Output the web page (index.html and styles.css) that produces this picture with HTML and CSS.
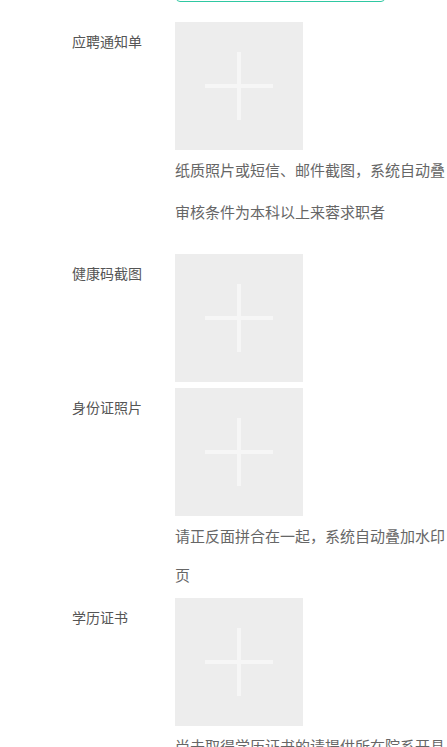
FILE: index.html
```html
<!DOCTYPE html>
<html lang="zh-CN">
<head>
    <meta charset="UTF-8">
    <meta name="viewport" content="width=device-width, initial-scale=1.0">
    <title>上传材料</title>
    <link rel="stylesheet" href="styles.css">
</head>
<body>
    <div class="form">
        <div class="row row-top">
            <div class="label"></div>
            <div class="field">
                <div class="input"></div>
            </div>
        </div>

        <div class="row">
            <div class="label">应聘通知单</div>
            <div class="field">
                <div class="upload"><span class="plus"></span></div>
                <p class="hint">纸质照片或短信、邮件截图，系统自动叠</p>
                <p class="hint hint-last">审核条件为本科以上来蓉求职者</p>
            </div>
        </div>

        <div class="row">
            <div class="label">健康码截图</div>
            <div class="field">
                <div class="upload"><span class="plus"></span></div>
            </div>
        </div>

        <div class="row">
            <div class="label">身份证照片</div>
            <div class="field">
                <div class="upload"><span class="plus"></span></div>
                <p class="hint hint-wrap">请正反面拼合在一起，系统自动叠加水印页</p>
            </div>
        </div>

        <div class="row">
            <div class="label">学历证书</div>
            <div class="field">
                <div class="upload"><span class="plus"></span></div>
                <p class="hint hint-wrap">尚未取得学历证书的请提供所在院系开具的在读证明</p>
            </div>
        </div>
    </div>
</body>
</html>
```

FILE: styles.css
```css
body {
    margin: 0;
    background: #fff;
    font-family: "Noto Sans CJK SC", "Noto Sans", sans-serif;
    color: #666;
    overflow: hidden;
}
.form {
    padding-bottom: 40px;
}
.row {
    display: flex;
    margin-bottom: 6px;
}
.row-top {
    margin-top: -34px;
    margin-bottom: 20px;
}
.label {
    width: 103px;
    padding-left: 72px;
    flex-shrink: 0;
    font-size: 14px;
    line-height: 38px;
    color: #555;
}
.field {
    width: 270px;
}
.input {
    width: 207px;
    height: 34px;
    margin-left: 1px;
    border: 1px solid #2fc8a2;
    border-radius: 4px;
}
.upload {
    width: 128px;
    height: 128px;
    background: #ededed;
    display: flex;
    justify-content: center;
    align-items: center;
}
.plus {
    position: relative;
    width: 68px;
    height: 68px;
}
.plus::before,
.plus::after {
    content: "";
    position: absolute;
    background: #f6f6f6;
}
.plus::before {
    left: 0;
    top: 32px;
    width: 68px;
    height: 4px;
}
.plus::after {
    left: 32px;
    top: 0;
    width: 4px;
    height: 68px;
}
.hint {
    margin: 0;
    font-size: 15px;
    line-height: 40px;
    white-space: nowrap;
    color: #666;
}
.hint-last {
    margin-top: 2px;
    margin-bottom: 16px;
}
.hint-wrap {
    white-space: normal;
    line-height: 39px;
    margin-bottom: -2px;
}
```
